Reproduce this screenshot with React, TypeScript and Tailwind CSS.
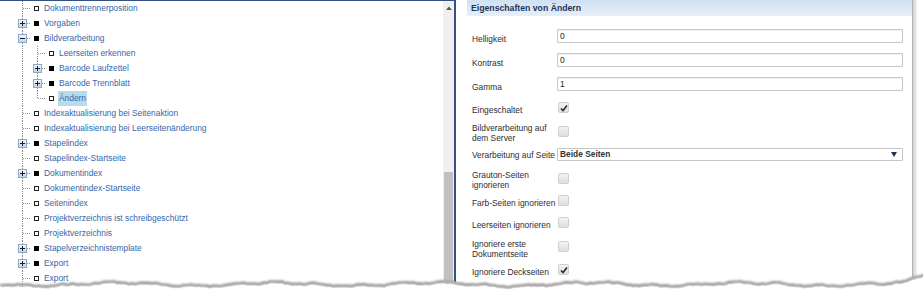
import React from "react"

type TreeNode = {
  label: string
  level: 1 | 2
  folder?: boolean
  open?: boolean
  last?: boolean
  selected?: boolean
}

const tree: TreeNode[] = [
  { label: "Dokumenttrennerposition", level: 1 },
  { label: "Vorgaben", level: 1, folder: true },
  { label: "Bildverarbeitung", level: 1, folder: true, open: true },
  { label: "Leerseiten erkennen", level: 2 },
  { label: "Barcode Laufzettel", level: 2, folder: true },
  { label: "Barcode Trennblatt", level: 2, folder: true },
  { label: "Ändern", level: 2, last: true, selected: true },
  { label: "Indexaktualisierung bei Seitenaktion", level: 1 },
  { label: "Indexaktualisierung bei Leerseitenänderung", level: 1 },
  { label: "Stapelindex", level: 1, folder: true },
  { label: "Stapelindex-Startseite", level: 1 },
  { label: "Dokumentindex", level: 1, folder: true },
  { label: "Dokumentindex-Startseite", level: 1 },
  { label: "Seitenindex", level: 1 },
  { label: "Projektverzeichnis ist schreibgeschützt", level: 1 },
  { label: "Projektverzeichnis", level: 1 },
  { label: "Stapelverzeichnistemplate", level: 1, folder: true },
  { label: "Export", level: 1, folder: true },
  { label: "Export", level: 1 },
]

const font = { fontFamily: '"Liberation Sans", Arial, sans-serif' }

function LineCell() {
  return (
    <svg width="15" height="15" className="shrink-0">
      <line x1="7.5" y1="0" x2="7.5" y2="15" stroke="#8c8c8c" strokeDasharray="1 1" />
    </svg>
  )
}

function Connector({ node }: { node: TreeNode }) {
  return (
    <svg width="15" height="15" className="shrink-0">
      <line x1="7.5" y1="0" x2="7.5" y2={node.last ? 7.5 : 15} stroke="#8c8c8c" strokeDasharray="1 1" />
      <line x1="8" y1="7.5" x2="15" y2="7.5" stroke="#8c8c8c" strokeDasharray="1 1" />
      {node.folder && (
        <g>
          <defs>
            <linearGradient id="exp" x1="0" y1="0" x2="0" y2="1">
              <stop offset="0" stopColor="#f4f8fd" />
              <stop offset="1" stopColor="#bfd3ec" />
            </linearGradient>
          </defs>
          <rect x="3.5" y="3.5" width="8" height="8" fill="url(#exp)" stroke="#8fa8c9" />
          <line x1="5" y1="7.5" x2="10" y2="7.5" stroke="#1a1a1a" />
          {!node.open && <line x1="7.5" y1="5" x2="7.5" y2="10" stroke="#1a1a1a" />}
        </g>
      )}
    </svg>
  )
}

function TreeRow({ node }: { node: TreeNode }) {
  return (
    <div className="flex h-[15px] items-center pl-[15px]">
      {node.level === 2 && <LineCell />}
      <Connector node={node} />
      <span
        className={
          node.folder
            ? "ml-[4px] h-[5px] w-[5px] shrink-0 bg-black"
            : "ml-[4px] h-[5px] w-[5px] shrink-0 border border-[#222] bg-white"
        }
      />
      <span
        className={
          node.selected
            ? "ml-[4px] h-[15px] whitespace-nowrap bg-[#b8dcec] px-[1px] text-[8.4px] leading-[15px] text-[#3467aa]"
            : "ml-[5px] whitespace-nowrap text-[8.4px] leading-[15px] text-[#3467aa]"
        }
      >
        {node.label}
      </span>
    </div>
  )
}

function Checkbox({ checked }: { checked?: boolean }) {
  return (
    <div className="flex h-[11px] w-[11px] items-center justify-center rounded-[2px] border border-[#cfcfcf] bg-gradient-to-b from-[#f3f3f3] to-[#dedede]">
      {checked && (
        <svg width="8" height="8" viewBox="0 0 8 8">
          <path d="M1 4.5 L3 6.5 L7 1.5" fill="none" stroke="#2a2a2a" strokeWidth="1.6" />
        </svg>
      )}
    </div>
  )
}

function TextInput({ value }: { value: string }) {
  return (
    <div className="flex h-[14px] w-[346px] items-center rounded-[1px] border border-[#c6c6c6] pl-[2px] text-[8.4px] text-[#222] shadow-[inset_0_1px_1px_rgba(0,0,0,0.06)]">
      {value}
    </div>
  )
}

function Label({ lines, pt }: { lines: string[]; pt: number }) {
  return (
    <div className="w-[90px] shrink-0 pl-[5px] text-[8.4px] leading-[10px] text-[#2e2e2e]" style={{ paddingTop: pt }}>
      {lines.map((l, i) => (
        <div key={i} className="whitespace-nowrap">
          {l}
        </div>
      ))}
    </div>
  )
}

// jagged torn edge along the bottom
function tornPath() {
  let seed = 7
  const rnd = () => {
    seed = (seed * 9301 + 49297) % 233280
    return seed / 233280
  }
  const pts: [number, number][] = []
  for (let x = 0; x <= 924; x += 3) {
    let y = 12 + 1.6 * Math.sin(x * 0.04) + 0.9 * Math.sin(x * 0.15 + 1) + (rnd() - 0.5) * 1.4
    if (x > 905) y -= (x - 905) * 0.5
    pts.push([x, y])
  }
  return pts
}

const edge = tornPath()
const shift = (dy: number) => edge.map(([x, y]) => `${x},${(y + dy).toFixed(1)}`).join(" ")

export default function App() {
  return (
    <div className="relative h-[297px] w-[923px] overflow-hidden bg-white" style={font}>
      <div className="flex h-full">
        {/* tree panel */}
        <div className="flex h-full w-[456px] border-r-2 border-t border-[#34527e]">
          <div className="flex-1">
            {tree.map((n, i) => (
              <TreeRow key={i} node={n} />
            ))}
          </div>
          <div className="flex w-[11px] flex-col bg-[#f0f0f0]">
            <div className="mt-[5px] flex justify-center">
              <svg width="6" height="4">
                <path d="M0 4 L3 0.5 L6 4 Z" fill="#5a5a5a" />
              </svg>
            </div>
            <div className="mx-[1px] mt-[162px] flex-1 bg-[#c1c1c1]" />
          </div>
        </div>

        {/* properties panel */}
        <div className="flex h-full flex-1">
          <div className="ml-[11px] flex w-[445px] flex-col">
            <div className="h-[16px] bg-gradient-to-b from-[#d0e1f3] to-[#e7eff9] px-[4px] text-[8.7px] font-bold leading-[16px] text-[#1d3354]">
              Eigenschaften von Ändern
            </div>

            <div className="mt-[13px] flex h-[24px]">
              <Label lines={["Helligkeit"]} pt={5} />
              <TextInput value="0" />
            </div>
            <div className="flex h-[24px]">
              <Label lines={["Kontrast"]} pt={5} />
              <TextInput value="0" />
            </div>
            <div className="flex h-[25px]">
              <Label lines={["Gamma"]} pt={5} />
              <TextInput value="1" />
            </div>
            <div className="flex h-[21px]">
              <Label lines={["Eingeschaltet"]} pt={3} />
              <div className="pl-[1px]">
                <Checkbox checked />
              </div>
            </div>
            <div className="flex h-[25px]">
              <Label lines={["Bildverarbeitung auf", "dem Server"]} pt={0} />
              <div className="pl-[1px] pt-[3px]">
                <Checkbox />
              </div>
            </div>
            <div className="flex h-[22px]">
              <Label lines={["Verarbeitung auf Seite"]} pt={2} />
              <div className="flex h-[13px] w-[346px] items-center justify-between rounded-[1px] border border-[#c6c6c6] pl-[2px] pr-[5px] text-[8.4px] font-bold text-[#333]">
                <span>Beide Seiten</span>
                <svg width="6" height="5">
                  <path d="M0 0 L6 0 L3 5 Z" fill="#1d3354" />
                </svg>
              </div>
            </div>
            <div className="flex h-[25px]">
              <Label lines={["Grauton-Seiten", "ignorieren"]} pt={0} />
              <div className="pl-[1px] pt-[3px]">
                <Checkbox />
              </div>
            </div>
            <div className="flex h-[22px]">
              <Label lines={["Farb-Seiten ignorieren"]} pt={3} />
              <div className="pl-[1px]">
                <Checkbox />
              </div>
            </div>
            <div className="flex h-[22px]">
              <Label lines={["Leerseiten ignorieren"]} pt={3} />
              <div className="pl-[1px]">
                <Checkbox />
              </div>
            </div>
            <div className="flex h-[25px]">
              <Label lines={["Ignoriere erste", "Dokumentseite"]} pt={0} />
              <div className="pl-[1px] pt-[2px]">
                <Checkbox />
              </div>
            </div>
            <div className="flex">
              <Label lines={["Ignoriere Deckseiten"]} pt={3} />
              <div className="pl-[1px]">
                <Checkbox checked />
              </div>
            </div>
          </div>
          <div className="w-px bg-[#b4b4b4]" />
          <div className="w-[5px] bg-gradient-to-r from-[#cfcfcf] to-white" />
        </div>
      </div>

      {/* torn bottom edge */}
      <svg className="absolute bottom-0 left-0" width="923" height="26" viewBox="0 0 923 26">
        <defs>
          <filter id="soft" x="-5%" y="-50%" width="110%" height="200%">
            <feGaussianBlur stdDeviation="1" />
          </filter>
        </defs>
        <polygon points={`0,26 ${shift(0)} 923,26`} fill="#ffffff" />
        <polyline points={shift(1.2)} fill="none" stroke="#8a8a8a" strokeWidth="2.4" filter="url(#soft)" />
        <polygon points={`0,26 ${shift(3.4)} 923,26`} fill="#ffffff" />
      </svg>
    </div>
  )
}
